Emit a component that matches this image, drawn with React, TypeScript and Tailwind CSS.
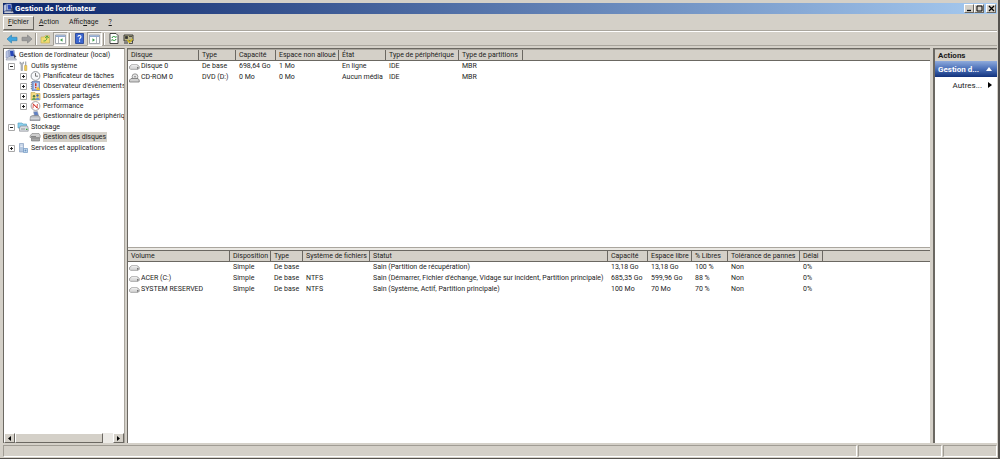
import type { ReactNode } from 'react';

type Column = { label: string; width: string };

const DISK_COLUMNS: Column[] = [
  { label: 'Disque', width: 'w-[71px]' },
  { label: 'Type', width: 'w-[37px]' },
  { label: 'Capacité', width: 'w-[40px]' },
  { label: 'Espace non alloué', width: 'w-[63px]' },
  { label: 'État', width: 'w-[47px]' },
  { label: 'Type de périphérique', width: 'w-[73px]' },
  { label: 'Type de partitions', width: 'w-[64px]' },
];

const DISK_ROWS = [
  ['Disque 0', 'De base', '698,64 Go', '1 Mo', 'En ligne', 'IDE', 'MBR'],
  ['CD-ROM 0', 'DVD (D:)', '0 Mo', '0 Mo', 'Aucun média', 'IDE', 'MBR'],
];

const VOLUME_COLUMNS: Column[] = [
  { label: 'Volume', width: 'w-[102px]' },
  { label: 'Disposition', width: 'w-[41px]' },
  { label: 'Type', width: 'w-[32px]' },
  { label: 'Système de fichiers', width: 'w-[67px]' },
  { label: 'Statut', width: 'w-[238px]' },
  { label: 'Capacité', width: 'w-[40px]' },
  { label: 'Espace libre', width: 'w-[44px]' },
  { label: '% Libres', width: 'w-[36px]' },
  { label: 'Tolérance de pannes', width: 'w-[72px]' },
  { label: 'Délai', width: 'w-[23px]' },
];

const VOLUME_ROWS = [
  ['', 'Simple', 'De base', '', 'Sain (Partition de récupération)', '13,18 Go', '13,18 Go', '100 %', 'Non', '0%'],
  ['ACER (C:)', 'Simple', 'De base', 'NTFS', "Sain (Démarrer, Fichier d'échange, Vidage sur incident, Partition principale)", '685,35 Go', '599,96 Go', '88 %', 'Non', '0%'],
  ['SYSTEM RESERVED', 'Simple', 'De base', 'NTFS', 'Sain (Système, Actif, Partition principale)', '100 Mo', '70 Mo', '70 %', 'Non', '0%'],
];

const raised = 'border border-t-white border-l-white border-r-[#6b6862] border-b-[#6b6862] bg-[#d4d0c8]';
const sunken = 'border border-t-[#a09c94] border-l-[#a09c94] border-r-white border-b-white';

/* Icons */

const ComputerIcon = ({ size = 12 }: { size?: number }) => (
  <svg width={size} height={size} viewBox="0 0 12 12" className="shrink-0">
    <path d="M1 2.500l3-1.500v7L1 9z" fill="#b9c4e2" stroke="#7f8cb4" strokeWidth=".5" />
    <path d="M4 1h5l1 7H4.500z" fill="#c6d2ee" stroke="#6678a8" strokeWidth=".6" />
    <path d="M5 2h3.400l.6 5H5.500z" fill="#2546b8" />
    <path d="M2 9h8.500l1 2H1z" fill="#d9dce4" stroke="#77809a" strokeWidth=".5" />
    <path d="M8.500 4.500l3 3.500-1.500.3L9.500 10z" fill="#3a3f52" />
  </svg>
);

const ToolsIcon = () => (
  <svg width="11" height="10" viewBox="0 0 11 10" className="shrink-0">
    <path d="M2 .8v2l1 1v5.700h1.500V3.800l1-1V.8L4.500 2.200H3z" fill="#b8bcc4" stroke="#7f848d" strokeWidth=".5" />
    <path d="M7 .5h1.300v4H7z" fill="#a5aab0" />
    <path d="M6.600 4.500h2.200v5H6.600z" fill="#f3d052" stroke="#b8923a" strokeWidth=".5" />
  </svg>
);

const ClockIcon = () => (
  <svg width="11" height="10" viewBox="0 0 11 10" className="shrink-0">
    <circle cx="5.500" cy="5" r="4.400" fill="#f7f8fa" stroke="#85898f" strokeWidth=".9" />
    <path d="M5.500 2v3.200H8" fill="none" stroke="#555" strokeWidth=".8" />
  </svg>
);

const EventIcon = () => (
  <svg width="11" height="10" viewBox="0 0 11 10" className="shrink-0">
    <path d="M2 .5h7.500v9H2z" fill="#8ca8dc" stroke="#5f72a2" strokeWidth=".7" />
    <path d="M4 2h4.500v6H4z" fill="#c9d8f2" />
    <path d="M5 2.200h1.500v3H5zM5 6h1.500v1.200H5z" fill="#d3372a" />
    <path d="M1.300 1v8" stroke="#666" strokeWidth=".8" strokeDasharray="1 1" />
    <path d="M8 5.500l2.200 3.500H5.800z" fill="#f0c02c" />
  </svg>
);

const SharedIcon = () => (
  <svg width="11" height="10" viewBox="0 0 11 10" className="shrink-0">
    <path d="M1 1.500h4l1 1h4v6.500H1z" fill="#f3db85" stroke="#c0a24a" strokeWidth=".6" />
    <circle cx="4" cy="5.200" r="1.200" fill="#4d7a40" />
    <circle cx="7.500" cy="4.500" r="1.200" fill="#3f68ac" />
    <path d="M2 9c0-3 4-3 4 0z" fill="#6ba458" />
    <path d="M5.700 9c0-3.500 4-3.500 4 0z" fill="#6b93d2" />
  </svg>
);

const PerformanceIcon = () => (
  <svg width="11" height="10" viewBox="0 0 11 10" className="shrink-0">
    <circle cx="5.500" cy="5" r="4.400" fill="#fff" stroke="#9a9494" strokeWidth=".9" />
    <path d="M3 7.200l.3-4 3.700 3.800.4-4" fill="none" stroke="#cf2c22" strokeWidth=".8" />
    <path d="M2.500 2.300l6 5.500" stroke="#cf2c22" strokeWidth=".8" />
  </svg>
);

const DeviceIcon = () => (
  <svg width="12" height="10" viewBox="0 0 12 10" className="shrink-0">
    <path d="M4.500.8l4-.3 1 4-4 .5z" fill="#5f80c4" stroke="#9aa0aa" strokeWidth=".5" />
    <path d="M1.500 5.500l2-1h6l1.500 2v3H1z" fill="#b4b8be" stroke="#73777e" strokeWidth=".6" />
    <path d="M1.500 7.200h9" stroke="#eceef0" strokeWidth=".8" />
  </svg>
);

const StorageIcon = () => (
  <svg width="12" height="10" viewBox="0 0 12 10" className="shrink-0">
    <path d="M1 1h4l1 1h3.500v4H1z" fill="#8bd0ee" stroke="#4f98bb" strokeWidth=".6" />
    <path d="M2.500 6l1-2h7l.7 2v3.200H2.500z" fill="#d9dde2" stroke="#7b8088" strokeWidth=".6" />
    <path d="M4 7h4" stroke="#777" strokeWidth=".7" />
    <path d="M9 6.700h1.400v1.400H9z" fill="#36a534" />
  </svg>
);

const DiskToolIcon = () => (
  <svg width="12" height="10" viewBox="0 0 12 10" className="shrink-0">
    <path d="M1 4l2-2.500h7l1.200 2v2H1z" fill="#cfcfcf" stroke="#7c7c7c" strokeWidth=".6" />
    <path d="M2.500 6h8v3h-8z" fill="#a8a8a8" stroke="#6e6e6e" strokeWidth=".6" />
    <path d="M2 4.500h5" stroke="#666" strokeWidth=".7" />
  </svg>
);

const ServicesIcon = () => (
  <svg width="11" height="10" viewBox="0 0 11 10" className="shrink-0">
    <path d="M1.500.5h4v8.500h-4z" fill="#b4c7e0" stroke="#7c95b8" strokeWidth=".6" />
    <path d="M2.300 2h2.400M2.300 3.500h2.400" stroke="#fff" strokeWidth=".7" />
    <path d="M5.500 5.500h4v4h-4z" fill="#c7dcf0" stroke="#6f95c0" strokeWidth=".7" />
    <circle cx="7.500" cy="7.500" r="1" fill="#6f95c0" />
  </svg>
);

const DriveIcon = () => (
  <svg width="11" height="6" viewBox="0 0 11 6" className="shrink-0">
    <path d="M.5 2.500L2.500.8h6l1.700 1.700v1.800l-1 1H1.500l-1-1z" fill="#dcdcdc" stroke="#909090" strokeWidth=".8" />
    <path d="M2.500 1.700h5.500" stroke="#fff" strokeWidth=".8" />
    <path d="M8 3.200H9.400V4.400H8z" fill="#555" />
  </svg>
);

const CdIcon = () => (
  <svg width="11" height="10" viewBox="0 0 11 10" className="shrink-0">
    <circle cx="6" cy="3.700" r="2.900" fill="#e3e3e3" stroke="#858585" strokeWidth=".8" />
    <circle cx="6" cy="3.700" r=".8" fill="#777" />
    <path d="M.5 7l1.500-1.500h7L10.200 7v2H.5z" fill="#d0d0d0" stroke="#777" strokeWidth=".8" />
  </svg>
);

const ArrowIcon = ({ forward = false }: { forward?: boolean }) => (
  <svg width="12" height="10" viewBox="0 0 12 10">
    {forward ? (
      <path d="M11 5L6.500 1v2.300H1v3.400h5.500V9z" fill="#9b9b9b" stroke="#858585" strokeWidth=".7" />
    ) : (
      <path d="M1 5l4.500-4v2.300H11v3.400H5.500V9z" fill="#3ea5df" stroke="#3585b4" strokeWidth=".7" />
    )}
  </svg>
);

const FolderUpIcon = () => (
  <svg width="11" height="10" viewBox="0 0 11 10">
    <path d="M1 3h3l1-1.200h4.500V9H1z" fill="#f2dc72" stroke="#c4b05a" strokeWidth=".7" />
    <path d="M3.500 7c2.500 0 3.500-1 3.500-4.500M5.200 4L7 1.800 8.700 4" fill="none" stroke="#4aa040" strokeWidth="1" />
  </svg>
);

const PaneIcon = ({ flip = false }: { flip?: boolean }) => (
  <svg width="11" height="10" viewBox="0 0 11 10">
    <path d="M.5 1h10v8.500H.5z" fill="#fff" stroke="#8d939d" strokeWidth=".8" />
    <path d="M1 1.300h9v1.700H1z" fill="#8fa8cf" />
    <path d={flip ? 'M7.500 3v6' : 'M3.500 3v6'} stroke="#8d939d" strokeWidth=".7" />
    <path d={flip ? 'M3.500 4.300v3.400L6 6z' : 'M7.500 4.300v3.400L5 6z'} fill="#3a9a48" />
  </svg>
);

const HelpIcon = () => (
  <svg width="9" height="11" viewBox="0 0 9 11">
    <path d="M.5.5h8v10h-8z" fill="#3c66cf" stroke="#1d3b90" strokeWidth=".8" />
    <path d="M3 3.800C3 2 6 2 6 3.800 6 5 4.500 5 4.500 6.500" fill="none" stroke="#fff" strokeWidth="1.100" />
    <path d="M4 7.500h1.100v1.200H4z" fill="#fff" />
  </svg>
);

const RefreshIcon = () => (
  <svg width="10" height="11" viewBox="0 0 10 11">
    <path d="M1 .5h6l2 2v8H1z" fill="#fff" stroke="#333" strokeWidth=".9" />
    <path d="M3 5c.3-1.800 2.500-2 3.300-.8M7 6c-.3 1.800-2.500 2-3.300.8" fill="none" stroke="#1f8f2d" strokeWidth="1" />
    <path d="M5.500 4.500H7.500V2.800zM4.500 6.500H2.500V8.200z" fill="#1f8f2d" />
  </svg>
);

const SettingsIcon = () => (
  <svg width="11" height="10" viewBox="0 0 11 10">
    <path d="M1 1h9v6H1z" fill="#b9b48a" stroke="#303030" strokeWidth=".9" />
    <path d="M2.500 2.500h2v2h-2zM6 2.500h3" fill="#333" stroke="#333" strokeWidth=".8" />
    <path d="M1 9h4" stroke="#303030" strokeWidth="1" />
    <path d="M4.500 6l2 2.500L9.500 5" fill="none" stroke="#d2bb20" strokeWidth="1.300" />
    <path d="M6 9.500h3.500V7" fill="none" stroke="#303030" strokeWidth=".8" />
  </svg>
);

/* Window parts */

const CaptionButton = ({ label, children }: { label: string; children: ReactNode }) => (
  <button aria-label={label} className={`flex h-[9px] w-[10px] items-center justify-center ${raised}`}>
    <svg width="7" height="7" viewBox="0 0 7 7" fill="none" stroke="#000" strokeWidth="1.300">
      {children}
    </svg>
  </button>
);

const Separator = () => <div className="mx-px h-3 w-[2px] border-l border-r border-l-[#9a968e] border-r-white" />;

const ToolButton = ({ label, pressed = false, children }: { label: string; pressed?: boolean; children: ReactNode }) => (
  <button
    aria-label={label}
    className={`flex h-[14px] w-[15px] items-center justify-center ${pressed ? `bg-[#eceae6] ${sunken}` : ''}`}
  >
    {children}
  </button>
);

const Expander = ({ open = false }: { open?: boolean }) => (
  <button aria-label={open ? 'Réduire' : 'Développer'} className="shrink-0">
    <svg width="7" height="7" viewBox="0 0 7 7">
      <path d="M.5.5h6v6h-6z" fill="#fff" stroke="#a8a8a8" />
      <path d={open ? 'M2 3.500h3' : 'M2 3.500h3M3.500 2v3'} stroke="#222" />
    </svg>
  </button>
);

type NodeProps = {
  icon: ReactNode;
  label: string;
  state?: 'open' | 'closed';
  selected?: boolean;
  children?: ReactNode;
};

const TreeNode = ({ icon, label, state, selected = false, children }: NodeProps) => (
  <li>
    <div className="flex h-[10px] items-center gap-[2px] whitespace-nowrap">
      {state ? <Expander open={state === 'open'} /> : <span className="w-[7px] shrink-0" />}
      <span className="flex w-3 shrink-0 justify-center">{icon}</span>
      <span className={selected ? 'bg-[#d4d0c8] pr-px leading-[10px]' : ''}>{label}</span>
    </div>
    {children && <ul className="pl-3">{children}</ul>}
  </li>
);

type GridProps = { label: string; columns: Column[]; rows: string[][]; icons: ReactNode[] };

const DataTable = ({ label, columns, rows, icons }: GridProps) => (
  <table aria-label={label} className="w-full table-fixed border-separate border-spacing-0 whitespace-nowrap text-left">
    <thead>
      <tr className="h-[11px]">
        {columns.map((c) => (
          <th
            key={c.label}
            className={`overflow-hidden border-b border-r border-b-[#6b6862] border-r-[#6b6862] bg-[#d4d0c8] p-0 pl-[3px] font-normal leading-[10px] ${c.width}`}
          >
            {c.label}
          </th>
        ))}
        <td className="border-b border-b-[#6b6862] bg-[#d4d0c8] p-0" />
      </tr>
    </thead>
    <tbody>
      {rows.map((row, r) => (
        <tr key={r} className="h-[11px]">
          {row.map((cell, i) => (
            <td key={i} className={`overflow-hidden p-0 ${i === 0 ? 'pl-px' : 'pl-[3px]'}`}>
              {i === 0 ? (
                <span className="flex h-[11px] items-center gap-px">
                  {icons[r]}
                  {cell}
                </span>
              ) : (
                cell
              )}
            </td>
          ))}
          <td />
        </tr>
      ))}
    </tbody>
  </table>
);

const MenuButton = ({ before = '', hot, after = '', active = false }: { before?: string; hot: string; after?: string; active?: boolean }) => (
  <button className={`h-[14px] px-1 ${active ? raised : 'border border-transparent'}`}>
    {before}
    <u>{hot}</u>
    {after}
  </button>
);

export default function App() {
  return (
    <div className="flex h-screen flex-col border-b border-r-2 border-b-[#55524e] border-r-[#55524e] bg-[#d4d0c8] pb-px pl-[3px] pr-px pt-[3px] font-[Roboto,'DejaVu_Sans_Condensed',sans-serif] text-[7px] leading-[11px] text-[#1c1c1c]">
      <header className="flex h-[11px] shrink-0 items-center bg-linear-to-r/srgb from-[#0a246a] to-[#a6caf0] pr-px text-white">
        <ComputerIcon size={11} />
        <h1 className="ml-px flex-1 text-[8px] font-bold">Gestion de l'ordinateur</h1>
        <CaptionButton label="Réduire">
          <path d="M1 5.500h4" />
        </CaptionButton>
        <CaptionButton label="Agrandir">
          <path d="M1 1h5v5H1z" strokeWidth="1" />
        </CaptionButton>
        <span className="w-[2px]" />
        <CaptionButton label="Fermer">
          <path d="M1 1l5 5M6 1L1 6" />
        </CaptionButton>
      </header>

      <nav className="mt-px flex h-4 shrink-0 items-center border-b border-b-[#aaa69e]">
        <MenuButton hot="F" after="ichier" active />
        <MenuButton hot="A" after="ction" />
        <MenuButton before="Affic" hot="h" after="age" />
        <MenuButton hot="?" />
      </nav>

      <div role="toolbar" className="flex h-[15px] shrink-0 items-center border-b border-t border-b-[#aaa69e] border-t-white pl-px">
        <ToolButton label="Précédent"><ArrowIcon /></ToolButton>
        <ToolButton label="Suivant"><ArrowIcon forward /></ToolButton>
        <Separator />
        <ToolButton label="Dossier parent"><FolderUpIcon /></ToolButton>
        <ToolButton label="Arborescence" pressed><PaneIcon /></ToolButton>
        <Separator />
        <ToolButton label="Aide"><HelpIcon /></ToolButton>
        <ToolButton label="Volet Actions" pressed><PaneIcon flip /></ToolButton>
        <Separator />
        <ToolButton label="Actualiser"><RefreshIcon /></ToolButton>
        <ToolButton label="Paramètres"><SettingsIcon /></ToolButton>
      </div>

      <main className="mt-[2px] flex min-h-0 flex-1 gap-[2px]">
        <aside className="flex w-[122px] shrink-0 flex-col border-l border-r border-t border-l-[#6b6862] border-r-[#aaa69e] border-t-[#6b6862] bg-white">
          <div className="min-h-0 flex-1 overflow-hidden pl-px pt-px">
            <div className="flex h-[10px] items-center gap-[2px] whitespace-nowrap">
              <ComputerIcon />
              <span>Gestion de l'ordinateur (local)</span>
            </div>
            <ul className="mt-px flex flex-col gap-px pl-[3px]">
              <TreeNode icon={<ToolsIcon />} label="Outils système" state="open">
                <TreeNode icon={<ClockIcon />} label="Planificateur de tâches" state="closed" />
                <TreeNode icon={<EventIcon />} label="Observateur d'événements" state="closed" />
                <TreeNode icon={<SharedIcon />} label="Dossiers partagés" state="closed" />
                <TreeNode icon={<PerformanceIcon />} label="Performance" state="closed" />
                <TreeNode icon={<DeviceIcon />} label="Gestionnaire de périphériques" />
              </TreeNode>
              <TreeNode icon={<StorageIcon />} label="Stockage" state="open">
                <TreeNode icon={<DiskToolIcon />} label="Gestion des disques" selected />
              </TreeNode>
              <TreeNode icon={<ServicesIcon />} label="Services et applications" state="closed" />
            </ul>
          </div>
          <div className="flex h-[10px] shrink-0 bg-[#eceae6]">
            <button aria-label="Défiler à gauche" className={`flex w-[11px] items-center justify-center ${raised}`}>
              <svg width="3" height="5" viewBox="0 0 3 5"><path d="M3 0v5L0 2.500z" /></svg>
            </button>
            <div className={`w-[88px] ${raised}`} />
            <div className="flex-1" />
            <button aria-label="Défiler à droite" className={`flex w-[11px] items-center justify-center ${raised}`}>
              <svg width="3" height="5" viewBox="0 0 3 5"><path d="M0 0v5l3-2.500z" /></svg>
            </button>
          </div>
        </aside>

        <div className="flex min-w-0 flex-1 flex-col border-l border-t border-l-[#6b6862] border-t-[#6b6862] bg-[#d4d0c8]">
          <section className="min-h-0 flex-[199] overflow-hidden border-t border-t-[#aaa69e] bg-white">
            <DataTable label="Disques" columns={DISK_COLUMNS} rows={DISK_ROWS} icons={[<DriveIcon />, <CdIcon />]} />
          </section>
          <div className="h-[3px] shrink-0 border-t border-t-[#aaa69e] bg-[#ebe9e4]" />
          <section className="min-h-0 flex-[193] overflow-hidden border-t border-t-[#6b6862] bg-white">
            <DataTable
              label="Volumes"
              columns={VOLUME_COLUMNS}
              rows={VOLUME_ROWS}
              icons={[<DriveIcon />, <DriveIcon />, <DriveIcon />]}
            />
          </section>
        </div>

        <aside className="ml-px w-16 shrink-0 border-l-2 border-t border-l-[#6b6862] border-t-[#6b6862] bg-white">
          <h2 className="border-t border-t-[#aaa69e] bg-[#d4d0c8] pl-[3px] text-[8px] font-bold">Actions</h2>
          <button className="flex h-4 w-full items-center justify-between bg-linear-to-b from-[#8fabdc] via-[#4a6fb8] to-[#12327c] pl-[3px] pr-[5px] text-[8px] font-bold text-white">
            Gestion d...
            <svg width="6" height="4" viewBox="0 0 6 4"><path d="M3 0l3 4H0z" fill="#fff" /></svg>
          </button>
          <button className="flex h-4 w-full items-center justify-end gap-[6px] pr-[5px] text-[8px]">
            Autres...
            <svg width="4" height="6" viewBox="0 0 4 6"><path d="M0 0v6l4-3z" /></svg>
          </button>
        </aside>
      </main>

      <footer className="mt-[2px] flex h-[12px] shrink-0 gap-px">
        <div className={`flex-1 ${sunken}`} />
        <div className={`w-[84px] ${sunken}`} />
        <div className={`w-[54px] ${sunken}`} />
      </footer>
    </div>
  );
}
